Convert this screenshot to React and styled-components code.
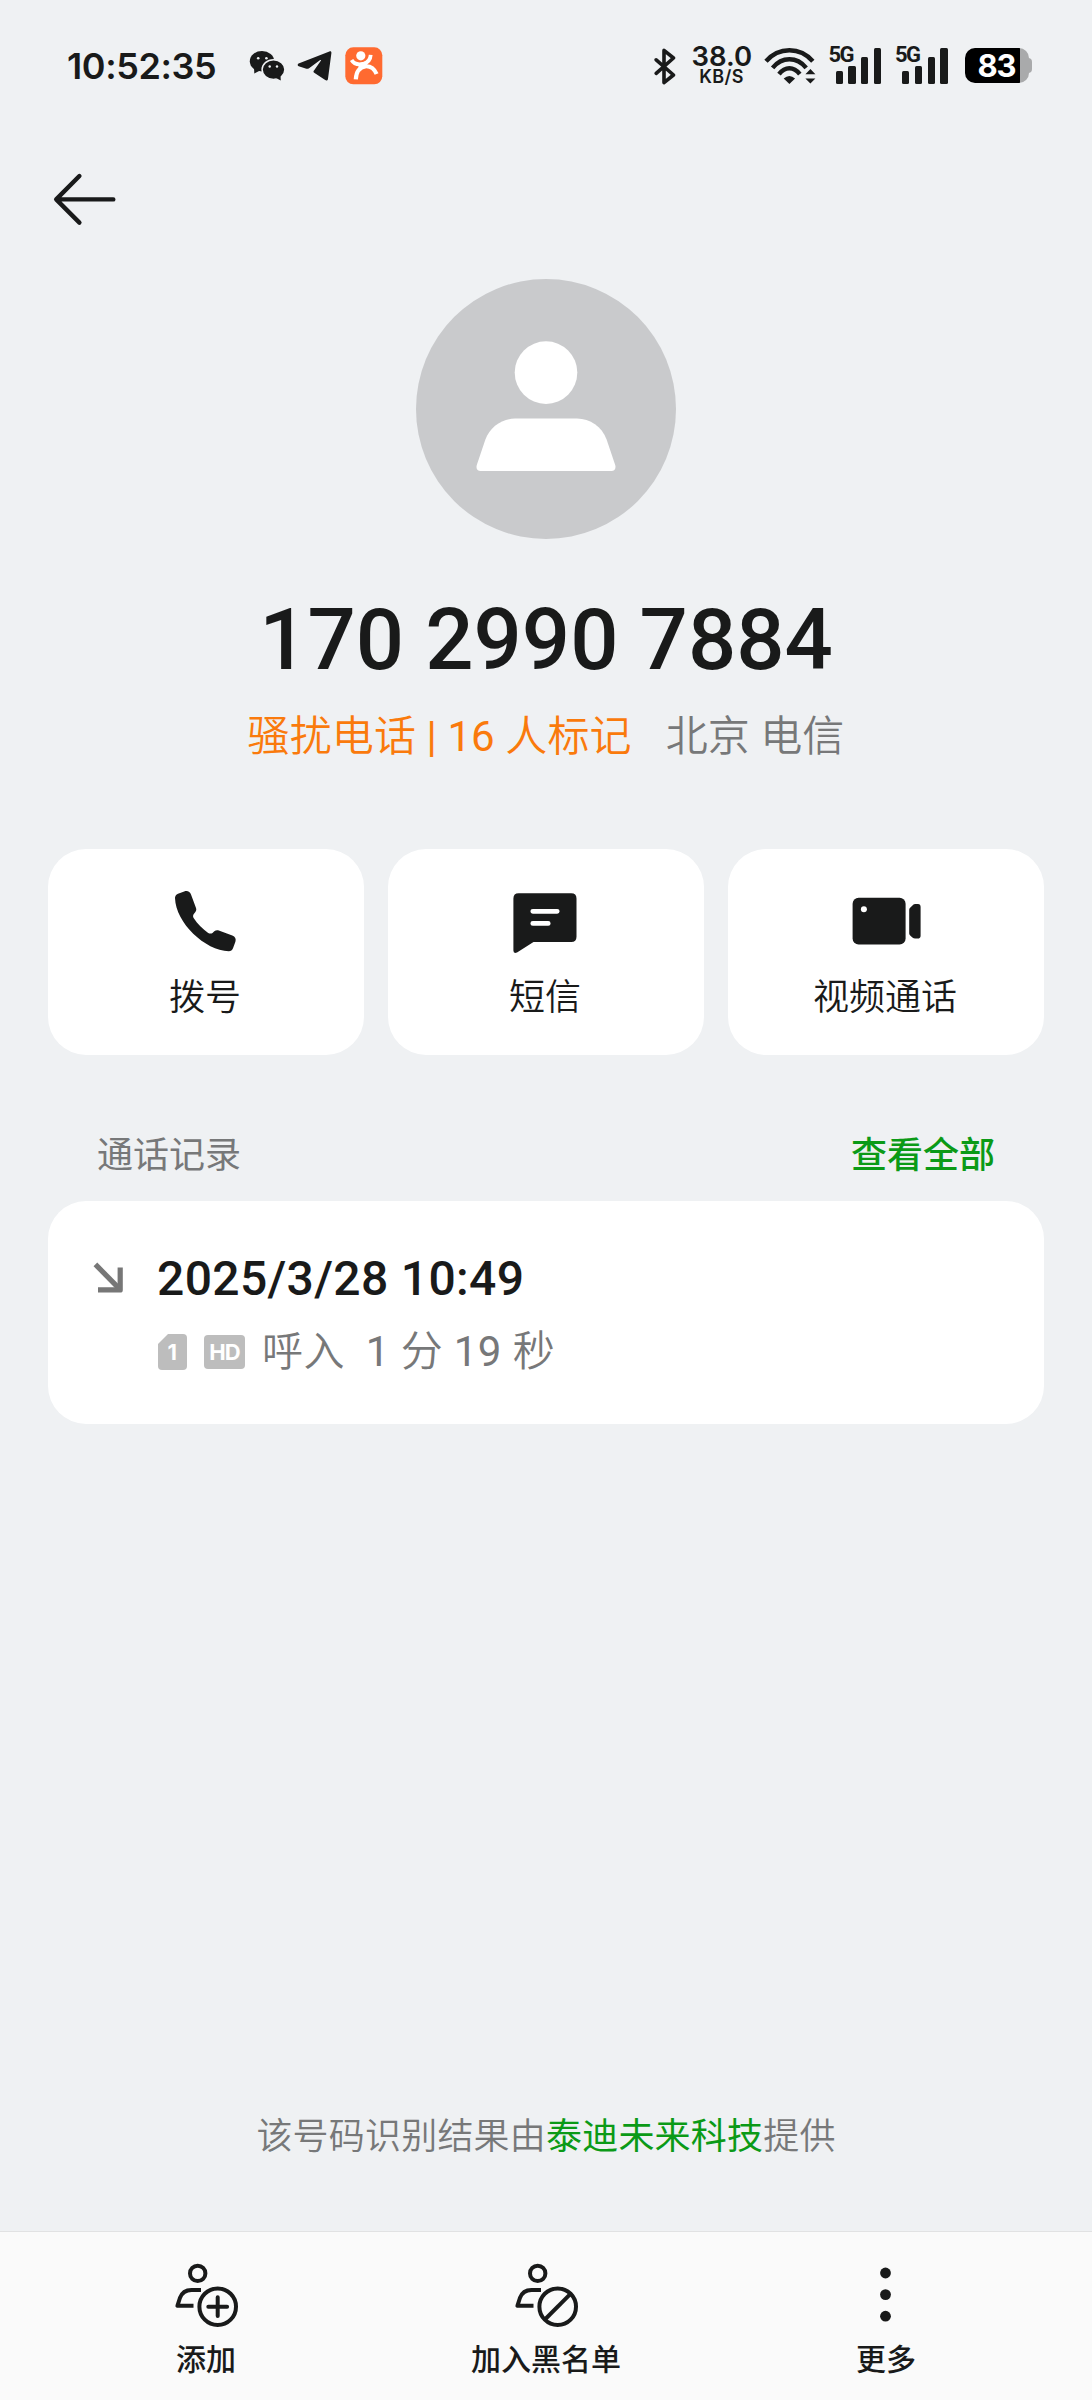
import React from 'react';
import styled, {createGlobalStyle} from 'styled-components';


const GlobalStyle = createGlobalStyle`
  * {
    box-sizing: border-box;
  }
  body {
    margin: 0;
    background-color: #eff1f3;
    color: #191a1a;
    font-family: Roboto, "Noto Sans CJK SC", sans-serif;
  }
  svg {
    display: block;
    flex-shrink: 0;
  }
`;

const WechatIcon = () => (
    <svg width="36" height="32" viewBox="0 0 36 32" fill="#191a1a">
        <ellipse cx="13" cy="11.2" rx="12.2" ry="10.2"/>
        <path d="M5 17L5.3 23.6L12 20Z"/>
        <ellipse cx="24.5" cy="19.6" rx="11.4" ry="9.8" stroke="#eff1f3" strokeWidth="1.5"/>
        <path d="M26 27.6L31.8 30.4L31.4 24Z"/>
        <g fill="#eff1f3">
            <circle cx="9.2" cy="8.2" r="1.3"/>
            <circle cx="17.4" cy="8.2" r="1.3"/>
            <circle cx="20.7" cy="16.5" r="1.2"/>
            <circle cx="28" cy="16.5" r="1.2"/>
        </g>
    </svg>
);

const TelegramIcon = () => (
    <svg width="36" height="32" viewBox="0 0 36 32" fill="#191a1a">
        <path d="M1.6 13.4L32.4 1.5C33.8 1 34.5 1.7 34.4 3L31 28.8C30.8 30.6 29.6 31 28.2 30.1L17.2 22.8C16.3 22.1 16.3 21.3 17 20.5L24 10.6C24.2 10 23.7 9.8 23.2 10.1L12.4 17.9C11 18.9 10 19 8.6 18.6L1.7 16.2C.4 15.6 .4 14 1.6 13.4Z"/>
    </svg>
);

const DianpingIcon = () => (
    <svg width="38" height="38" viewBox="0 0 38 38" fill="none">
        <rect x="0.3" y="0.3" width="37" height="37" rx="8" fill="#ff6a30"/>
        <circle cx="15.8" cy="8.8" r="4.6" fill="#fff"/>
        <path d="M6.6 13Q9 17.2 14.5 17.3L19 16.6Q25.3 14.4 25.7 7.8" stroke="#fff" strokeWidth="3.8"/>
        <path d="M10.8 32.4Q11.4 20.8 20.5 19.3Q28 18.8 31.6 27" stroke="#fff" strokeWidth="4.2"/>
        <path d="M13 16H21L24 20L14 23Z" fill="#fff"/>
    </svg>
);

const BluetoothIcon = () => (
    <svg width="24" height="38" viewBox="0 0 24 38" fill="none" stroke="#191a1a" strokeWidth="3.6" strokeLinecap="round" strokeLinejoin="round">
        <path d="M3.2 12.8L20.5 28L11 35.6V3.4L20.5 11L3.2 26.4"/>
    </svg>
);

const WifiIcon = () => (
    <svg width="54" height="38" viewBox="0 0 54 38" fill="none" stroke="#191a1a" strokeWidth="4.4">
        <path d="M3 14.2Q12.6 3.2 26.4 3.2Q40.2 3.2 49.8 14.2"/>
        <path d="M9.6 20.8Q16.6 12.2 26.4 12.2Q36.2 12.2 43.2 20.8"/>
        <path d="M16 27.2Q20.6 21.3 26.4 21.3Q32.2 21.3 36.8 27.2"/>
        <path d="M26.4 37L20.7 31.6Q26.4 26.6 32.1 31.6Z" fill="#191a1a" stroke="none"/>
        <path d="M47.4 22L52.4 27.2H42.4ZM47.4 36.6L42.4 31.4H52.4Z" fill="#191a1a" stroke="none"/>
    </svg>
);

const BackIcon = () => (
    <svg width="64" height="54" viewBox="0 0 64 54" fill="none" stroke="#191a1a" strokeWidth="4.4" strokeLinecap="round" strokeLinejoin="round">
        <path d="M60.3 27.4H3.6M26.4 4L3.2 27.4L26.4 50.6"/>
    </svg>
);

const AvatarIcon = () => (
    <svg width="140" height="132" viewBox="0 0 140 132" fill="#fff">
        <circle cx="70" cy="32.6" r="31.3"/>
        <path d="M39 78.6H101C114 78.6 126 87 130.6 99.5L139.2 125C140.2 128.4 138.6 131 135.4 131H4.6C1.4 131 -.2 128.4 .8 125L9.4 99.5C14 87 26 78.6 39 78.6Z"/>
    </svg>
);

const PhoneIcon = () => (
    <svg width="64" height="64" viewBox="0 0 64 64" fill="#191a1a">
        <path d="M1 8C1 6 2 4.5 4 3.7L10.2 1.4C13.5 .4 16 1.6 17 4.5L22 18C22.6 19.8 22.2 21 21.2 22.2L19.8 24C18.8 25.3 18.9 27 19.8 28.3C23.6 34 28.6 39 34.2 42.9C35.5 43.8 37.3 43.9 38.5 42.9L40.3 41.3C41.5 40.3 43 39.8 44.8 40.4L58.3 45.4C61.2 46.5 62.3 49 61.4 51.8L59 58.3C58.3 60.2 56.8 61.3 54.8 61.3C31 60.5 1.8 33 1 8Z"/>
    </svg>
);

const MessageIcon = () => (
    <svg width="66" height="64" viewBox="0 0 66 64" fill="none">
        <path d="M5.6 3.3H58.2Q63.5 3.3 63.5 8.6V46.7Q63.5 52 58.2 52H20.5L4 62.5Q.4 64 .4 60.5V8.6Q.4 3.3 5.6 3.3Z" fill="#191a1a"/>
        <path d="M19.8 21.3H44.2M19.8 33.4H35.2" stroke="#fff" strokeWidth="4.8" strokeLinecap="round"/>
    </svg>
);

const VideoIcon = () => (
    <svg width="70" height="64" viewBox="0 0 70 64" fill="#191a1a">
        <rect x="1.6" y="7.8" width="53" height="46.8" rx="6"/>
        <circle cx="12.9" cy="19.2" r="3" fill="#fff"/>
        <path d="M62 14H67Q69.6 14 69.6 17V45.8Q69.6 48.6 66.6 48.6H64.1Q62.6 48.6 61.4 47.5L59.2 45.6Q58.2 44.7 58.2 43.5V19.8Q58.2 18.4 59.4 17.4L61.2 15.8Q62.4 14 64 14Z"/>
    </svg>
);

const IncomingIcon = () => (
    <svg width="32" height="32" viewBox="0 0 32 32" fill="none" stroke="#777" strokeWidth="5.2">
        <path d="M2.4 2.4L27 27.4"/>
        <path d="M27.2 5.4V27.9H5" strokeLinejoin="round"/>
    </svg>
);

const AddContactIcon = ({blocked}) => (
    <svg width="62" height="65" viewBox="0 0 62 65" fill="none" stroke="#191a1a" strokeWidth="4" overflow="visible">
        <circle cx="22.7" cy="10.4" r="7.7"/>
        <path d="M26 27H16.5C10.5 27 6.8 29.8 4.9 35L2.4 42.8H18.5" strokeLinejoin="round"/>
        <circle cx="42.7" cy="43.7" r="18.3"/>
        {blocked
            ? <path d="M29.9 56.5L55.5 30.9"/>
            : <path d="M33.3 43.7H52.1M42.7 34.3V53.1" strokeLinecap="round"/>}
    </svg>
);

const MoreIcon = () => (
    <svg width="12" height="65" viewBox="0 0 12 65" fill="#191a1a">
        <circle cx="5.5" cy="10" r="5.4"/>
        <circle cx="5.5" cy="31.6" r="5.4"/>
        <circle cx="5.5" cy="53.2" r="5.4"/>
    </svg>
);

const actions = [
    {label: '拨号', icon: <PhoneIcon/>},
    {label: '短信', icon: <MessageIcon/>},
    {label: '视频通话', icon: <VideoIcon/>},
];

const tabs = [
    {label: '添加', icon: <AddContactIcon/>},
    {label: '加入黑名单', icon: <AddContactIcon blocked/>},
    {label: '更多', icon: <MoreIcon/>},
];

const SignalBars = () => (
    <Signal>
        <SignalType>5G</SignalType>
        <Bar h={13.5}/>
        <Bar h={18}/>
        <Bar h={27}/>
        <Bar h={36.5}/>
    </Signal>
);

const App = () => {
    return (<Screen>
            <GlobalStyle/>
            <StatusBar>
                <Clock>10:52:35</Clock>
                <AppIcons>
                    <WechatIcon/>
                    <TelegramIcon/>
                    <DianpingIcon/>
                </AppIcons>
                <SystemIcons>
                    <BluetoothIcon/>
                    <Speed>
                        <SpeedValue>38.0</SpeedValue>
                        <SpeedUnit>KB/S</SpeedUnit>
                    </Speed>
                    <WifiIcon/>
                    <SignalBars/>
                    <SignalBars/>
                    <Battery>
                        <BatteryLevel>83</BatteryLevel>
                    </Battery>
                </SystemIcons>
            </StatusBar>
            <Header>
                <BackIcon/>
            </Header>
            <Profile>
                <Avatar>
                    <AvatarIcon/>
                </Avatar>
                <PhoneNumber>170 2990 7884</PhoneNumber>
                <Tags>
                    <SpamTag>骚扰电话<Digits> | 16 </Digits>人标记</SpamTag>
                    <Region>北京 电信</Region>
                </Tags>
            </Profile>
            <Actions>
                {actions.map(({label, icon}) => (
                    <ActionCard key={label}>
                        {icon}
                        <ActionLabel>{label}</ActionLabel>
                    </ActionCard>
                ))}
            </Actions>
            <SectionHead>
                <SectionTitle>通话记录</SectionTitle>
                <SectionLink>查看全部</SectionLink>
            </SectionHead>
            <CallCard>
                <CallArrow>
                    <IncomingIcon/>
                </CallArrow>
                <CallInfo>
                    <CallDate>2025/3/28 10:49</CallDate>
                    <CallMeta>
                        <SimBadge>1</SimBadge>
                        <HdBadge>HD</HdBadge>
                        <span>呼入</span>
                        <Duration><Digits>1 </Digits>分<Digits> 19 </Digits>秒</Duration>
                    </CallMeta>
                </CallInfo>
            </CallCard>
            <Provider>该号码识别结果由<b>泰迪未来科技</b>提供</Provider>
            <TabBar>
                {tabs.map(({label, icon}) => (
                    <Tab key={label}>
                        {icon}
                        <TabLabel>{label}</TabLabel>
                    </Tab>
                ))}
            </TabBar>
        </Screen>);
};

export default App;

const Screen = styled.div`
  display: flex;
  flex-direction: column;
  width: 1092px;
  height: 2400px;
  overflow: hidden;
  background-color: #eff1f3;
`;

const StatusBar = styled.div`
  display: flex;
  align-items: center;
  height: 131px;
  padding: 0 59px 0 67px;
`;

const Clock = styled.div`
  width: 182px;
  font: 600 36px/40px Inter, sans-serif;
  letter-spacing: -0.4px;
`;

const AppIcons = styled.div`
  display: flex;
  align-items: center;
  gap: 12px;
`;

const SystemIcons = styled.div`
  display: flex;
  align-items: center;
  height: 38px;
  margin-left: auto;
`;

const Speed = styled.div`
  width: 60px;
  margin: 0 11px 0 15px;
  text-align: center;
  font-family: Inter, sans-serif;
  white-space: nowrap;
`;

const SpeedValue = styled.div`
  font-size: 27.5px;
  font-weight: 600;
  line-height: 21px;
`;

const SpeedUnit = styled.div`
  font-size: 18px;
  font-weight: 600;
  line-height: 19px;
  letter-spacing: 0.4px;
`;

const Signal = styled.div`
  position: relative;
  display: flex;
  align-items: flex-end;
  gap: 5.4px;
  width: 52px;
  height: 37px;
  margin-left: 13px;
  padding-left: 6px;

  & + & {
    margin-left: 14.5px;
  }
`;

const SignalType = styled.span`
  position: absolute;
  top: 0;
  left: -1px;
  font: 700 22px/16px Roboto, sans-serif;
  letter-spacing: -1.6px;
`;

const Bar = styled.i`
  width: 7.4px;
  height: ${({h}) => h}px;
  border-radius: 1.5px;
  background-color: #191a1a;
`;

const Battery = styled.div`
  position: relative;
  display: flex;
  width: 64px;
  height: 35px;
  margin: 0 4px 0 17px;
  border-radius: 10px;
  background: linear-gradient(to right, #000 55px, #a9aaab 55px);

  &::after {
    content: '';
    position: absolute;
    top: 10px;
    right: -3px;
    width: 4px;
    height: 15px;
    border-radius: 0 4px 4px 0;
    background-color: #a9aaab;
  }
`;

const BatteryLevel = styled.span`
  width: 63px;
  text-align: center;
  color: #fff;
  font: 700 31px/36px Inter, sans-serif;
  letter-spacing: -1px;
`;

const Header = styled.div`
  height: 148px;
  padding: 41px 53px;
`;

const Profile = styled.div`
  display: flex;
  flex-direction: column;
  align-items: center;
`;

const Avatar = styled.div`
  display: flex;
  justify-content: center;
  width: 260px;
  height: 260px;
  padding-top: 61px;
  border-radius: 50%;
  background-color: #c9cacc;
`;

const PhoneNumber = styled.div`
  margin-top: 51px;
  font-size: 85px;
  font-weight: 500;
  line-height: 100px;
`;

const Tags = styled.div`
  display: flex;
  gap: 34px;
  margin-top: 17px;
  font-size: 42px;
  font-weight: 350;
  letter-spacing: 0.1px;
  line-height: 60px;
`;

const Digits = styled.span`
  font-weight: 400;
`;

const SpamTag = styled.span`
  color: #fa7a0c;
`;

const Region = styled.span`
  color: #777879;
`;

const Actions = styled.div`
  display: grid;
  grid-template-columns: repeat(3, 1fr);
  gap: 24px;
  margin: 82px 48px 0;
`;

const ActionCard = styled.div`
  display: flex;
  flex-direction: column;
  align-items: center;
  height: 206px;
  padding-top: 41px;
  border-radius: 38px;
  background-color: #fff;
`;

const ActionLabel = styled.div`
  margin-top: 19px;
  padding-right: 2px;
  font-size: 36px;
  font-weight: 350;
  line-height: 50px;
`;

const SectionHead = styled.div`
  display: flex;
  justify-content: space-between;
  margin: 76px 97px 0;
  font-size: 36px;
  line-height: 50px;
`;

const SectionTitle = styled.div`
  color: #777879;
`;

const SectionLink = styled.div`
  color: #0b9a17;
  font-weight: 500;
`;

const CallCard = styled.div`
  display: flex;
  height: 223px;
  margin: 20px 48px 0;
  padding: 49px 45px;
  border-radius: 38px;
  background-color: #fff;
`;

const CallArrow = styled.div`
  width: 64px;
  padding-top: 12px;
`;

const CallInfo = styled.div`
  display: flex;
  flex-direction: column;
`;

const CallDate = styled.div`
  font-size: 48px;
  font-weight: 500;
  letter-spacing: 0.35px;
  line-height: 57px;
`;

const CallMeta = styled.div`
  display: flex;
  align-items: center;
  margin-top: 15px;
  padding-left: 1px;
  color: #777879;
  font-size: 41px;
  font-weight: 350;
  letter-spacing: 0.4px;
  line-height: 60px;
`;

const SimBadge = styled.span`
  width: 29px;
  height: 36px;
  border-radius: 4px;
  background-color: #bdbdbd;
  clip-path: polygon(10px 0, 100% 0, 100% 100%, 0 100%, 0 10px);
  color: #fff;
  text-align: center;
  font: 700 22px/37px Inter, sans-serif;
`;

const HdBadge = styled.span`
  width: 41px;
  height: 34px;
  margin: 0 17px 0 17px;
  border-radius: 4px;
  background-color: #bdbdbd;
  color: #fff;
  text-align: center;
  font: 700 22px/34px Inter, sans-serif;
  letter-spacing: -0.8px;
`;

const Duration = styled.span`
  margin-left: 21px;
  font-size: 42px;
`;

const Provider = styled.div`
  margin-top: auto;
  margin-bottom: 69px;
  text-align: center;
  color: #777879;
  font-size: 36px;
  font-weight: 350;
  letter-spacing: 0.2px;
  line-height: 50px;

  b {
    color: #0b9a17;
    font-weight: 400;
  }
`;

const TabBar = styled.div`
  display: grid;
  grid-template-columns: repeat(3, 1fr);
  height: 169px;
  padding: 31px 36px 0;
  border-top: 1px solid #e1e2e3;
  background-color: #fafafa;
`;

const Tab = styled.div`
  display: flex;
  flex-direction: column;
  align-items: center;
`;

const TabLabel = styled.div`
  margin-top: 12px;
  font-size: 30px;
  font-weight: 500;
  line-height: 40px;
`;
